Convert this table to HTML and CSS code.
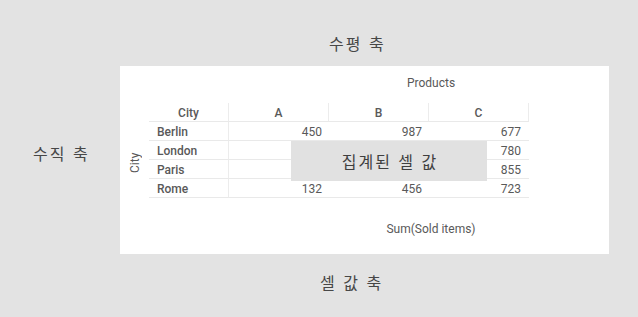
FILE: index.html
```html
<!DOCTYPE html>
<html lang="ko">
<head>
<meta charset="utf-8">
<link rel="stylesheet" href="styles.css">
</head>
<body>
<div class="stage">
  <div class="axis-label top-label">수평 축</div>
  <div class="axis-label left-label">수직 축</div>
  <div class="panel">
    <div class="dim-title">Products</div>
    <div class="pivot">
      <div class="row-dim"><span class="row-dim-text">City</span></div>
      <div class="table-wrap">
        <table class="grid">
          <thead>
            <tr><th class="c-city">City</th><th class="c-num">A</th><th class="c-num">B</th><th class="c-num">C</th></tr>
          </thead>
          <tbody>
            <tr><td class="name">Berlin</td><td class="val">450</td><td class="val">987</td><td class="val">677</td></tr>
            <tr><td class="name">London</td><td class="val"></td><td class="val"></td><td class="val">780</td></tr>
            <tr><td class="name">Paris</td><td class="val"></td><td class="val"></td><td class="val">855</td></tr>
            <tr><td class="name">Rome</td><td class="val">132</td><td class="val">456</td><td class="val">723</td></tr>
          </tbody>
        </table>
        <div class="cell-callout">집계된 셀 값</div>
      </div>
    </div>
    <div class="measure">Sum(Sold items)</div>
  </div>
  <div class="axis-label bottom-label">셀 값 축</div>
</div>
</body>
</html>
```
FILE: styles.css
```css
html, body {
  margin: 0;
  padding: 0;
}
body {
  background: #e3e3e3;
  width: 638px;
  height: 317px;
  overflow: hidden;
}
.stage {
  display: grid;
  grid-template-columns: 120px 489px 29px;
  grid-template-rows: 66px 188px 63px;
}
.axis-label {
  font-family: "Noto Sans CJK KR", "Noto Sans", sans-serif;
  font-size: 16px;
  line-height: 22px;
  color: #474747;
  letter-spacing: 2px;
  white-space: nowrap;
}
.top-label {
  grid-column: 2;
  grid-row: 1;
  align-self: end;
  margin: 0 0 12px 209px;
}
.left-label {
  grid-column: 1;
  grid-row: 2;
  justify-self: start;
  align-self: start;
  margin: 76px 0 0 33px;
}
.bottom-label {
  grid-column: 2;
  grid-row: 3;
  align-self: start;
  margin: 17px 0 0 200px;
}
.panel {
  grid-column: 2;
  grid-row: 2;
  background: #ffffff;
  padding-top: 10px;
  font-family: Roboto, "Liberation Sans", sans-serif;
  font-size: 12px;
  color: #595959;
  display: flex;
  flex-direction: column;
}
.dim-title, .measure {
  margin-left: 133px;
  text-align: center;
  line-height: 14px;
}
.pivot {
  display: flex;
  margin-top: 13px;
}
.row-dim {
  width: 29px;
  display: flex;
  justify-content: center;
  padding-top: 50px;
}
.row-dim-text {
  writing-mode: vertical-rl;
  transform: rotate(180deg);
  line-height: 14px;
  height: 20px;
}
.table-wrap {
  position: relative;
}
.grid {
  border-collapse: separate;
  border-spacing: 0;
}
.grid th, .grid td {
  padding: 2px 0 0 0;
  line-height: 16px;
  border-bottom: 1px solid #e9e9e9;
  white-space: nowrap;
}
.grid th {
  font-weight: 500;
  text-align: center;
  border-right: 1px solid #ececec;
}
.c-city { width: 79px; }
.c-num { width: 99px; }
.grid td.name {
  font-weight: 500;
  text-align: left;
  padding-left: 8px;
  border-right: 1px solid #ececec;
}
.grid td.val {
  text-align: right;
  padding-right: 7px;
}
.grid td:last-child {
  padding-right: 8px;
}
.cell-callout {
  position: absolute;
  left: 142px;
  top: 38px;
  width: 196px;
  height: 40px;
  background: #e1e1e1;
  display: flex;
  align-items: center;
  justify-content: center;
  font-family: "Noto Sans CJK KR", "Noto Sans", sans-serif;
  font-size: 16px;
  color: #3f3f3f;
  letter-spacing: 2px;
  padding-left: 2px;
  box-sizing: border-box;
}
.measure {
  margin-top: 24px;
}
```
